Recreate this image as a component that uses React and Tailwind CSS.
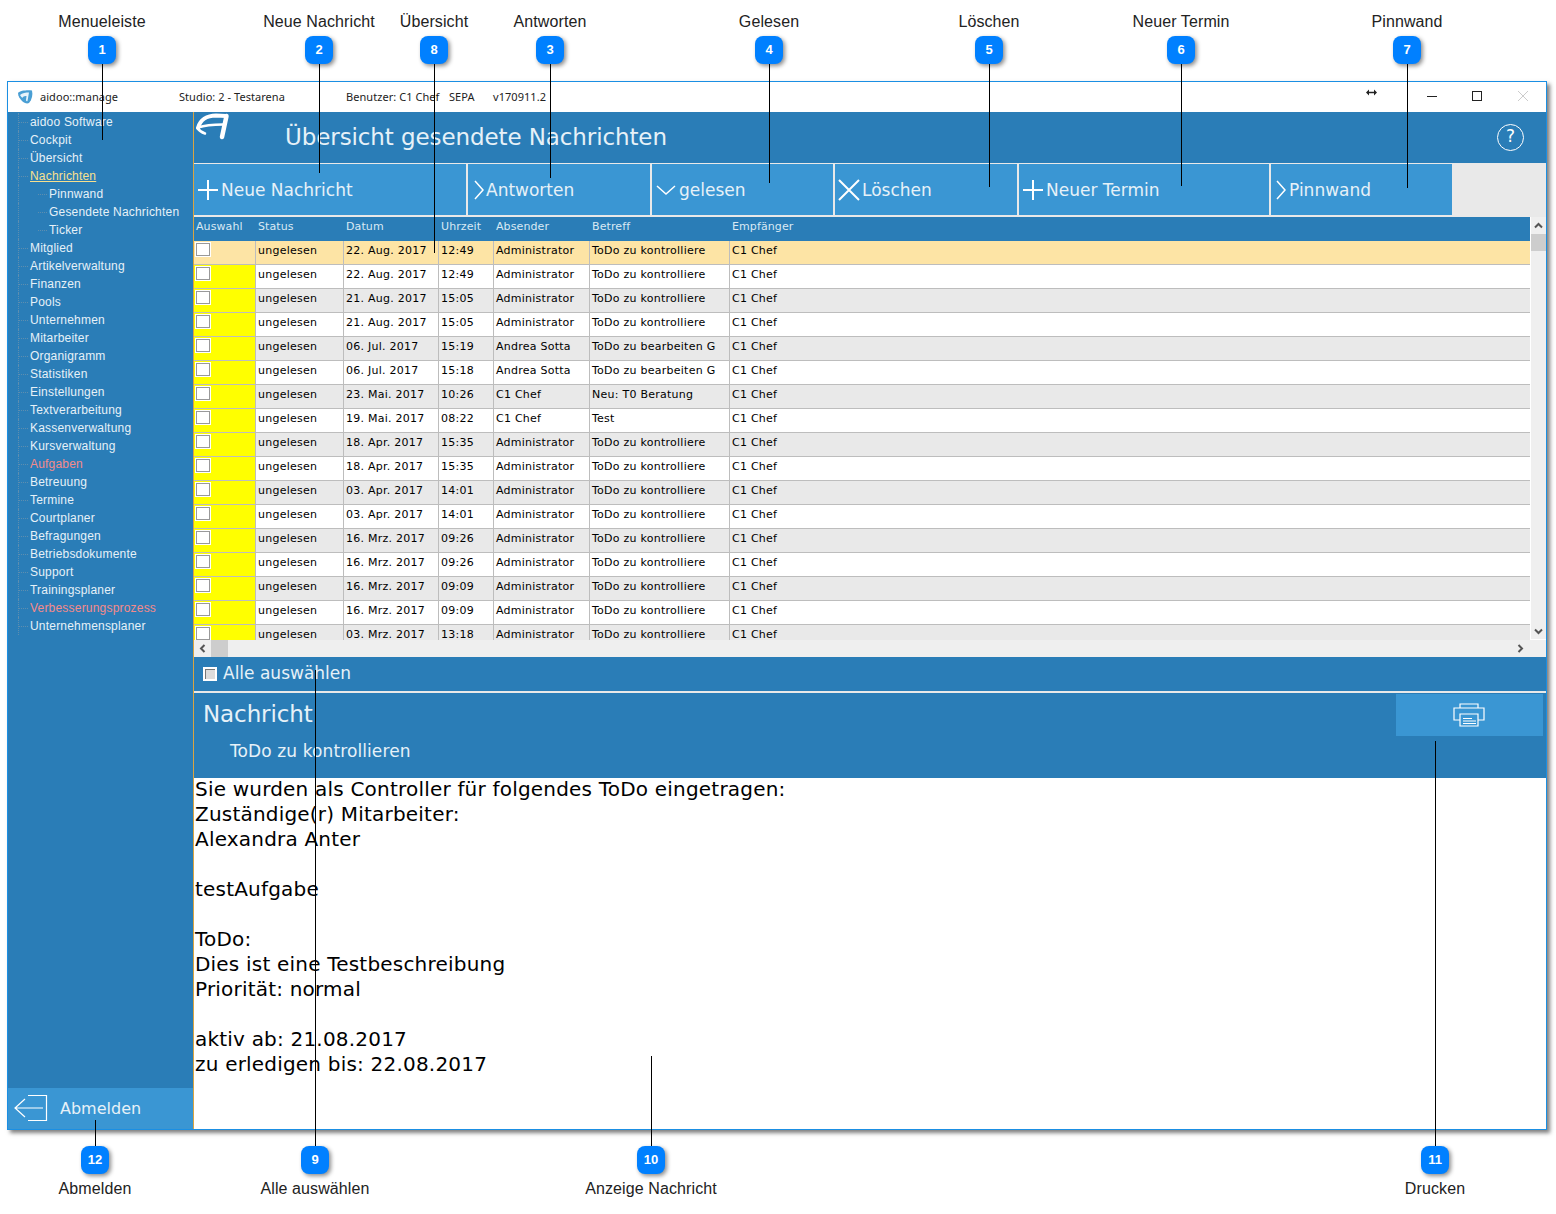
import React from "react";

const menu = [
  { label: "aidoo Software" },
  { label: "Cockpit" },
  { label: "Übersicht" },
  { label: "Nachrichten", active: true },
  { label: "Pinnwand", sub: true },
  { label: "Gesendete Nachrichten", sub: true },
  { label: "Ticker", sub: true },
  { label: "Mitglied" },
  { label: "Artikelverwaltung" },
  { label: "Finanzen" },
  { label: "Pools" },
  { label: "Unternehmen" },
  { label: "Mitarbeiter" },
  { label: "Organigramm" },
  { label: "Statistiken" },
  { label: "Einstellungen" },
  { label: "Textverarbeitung" },
  { label: "Kassenverwaltung" },
  { label: "Kursverwaltung" },
  { label: "Aufgaben", red: true },
  { label: "Betreuung" },
  { label: "Termine" },
  { label: "Courtplaner" },
  { label: "Befragungen" },
  { label: "Betriebsdokumente" },
  { label: "Support" },
  { label: "Trainingsplaner" },
  { label: "Verbesserungsprozess", red: true },
  { label: "Unternehmensplaner" },
];

const rows = [
  ["22. Aug. 2017", "12:49", "Administrator", "ToDo zu kontrolliere"],
  ["22. Aug. 2017", "12:49", "Administrator", "ToDo zu kontrolliere"],
  ["21. Aug. 2017", "15:05", "Administrator", "ToDo zu kontrolliere"],
  ["21. Aug. 2017", "15:05", "Administrator", "ToDo zu kontrolliere"],
  ["06. Jul. 2017", "15:19", "Andrea Sotta", "ToDo zu bearbeiten G"],
  ["06. Jul. 2017", "15:18", "Andrea Sotta", "ToDo zu bearbeiten G"],
  ["23. Mai. 2017", "10:26", "C1 Chef", "Neu: T0 Beratung"],
  ["19. Mai. 2017", "08:22", "C1 Chef", "Test"],
  ["18. Apr. 2017", "15:35", "Administrator", "ToDo zu kontrolliere"],
  ["18. Apr. 2017", "15:35", "Administrator", "ToDo zu kontrolliere"],
  ["03. Apr. 2017", "14:01", "Administrator", "ToDo zu kontrolliere"],
  ["03. Apr. 2017", "14:01", "Administrator", "ToDo zu kontrolliere"],
  ["16. Mrz. 2017", "09:26", "Administrator", "ToDo zu kontrolliere"],
  ["16. Mrz. 2017", "09:26", "Administrator", "ToDo zu kontrolliere"],
  ["16. Mrz. 2017", "09:09", "Administrator", "ToDo zu kontrolliere"],
  ["16. Mrz. 2017", "09:09", "Administrator", "ToDo zu kontrolliere"],
  ["03. Mrz. 2017", "13:18", "Administrator", "ToDo zu kontrolliere"],
];

const topCallouts = [
  { n: 1, label: "Menueleiste", x: 102, end: 140 },
  { n: 2, label: "Neue Nachricht", x: 319, end: 173 },
  { n: 8, label: "Übersicht", x: 434, end: 253 },
  { n: 3, label: "Antworten", x: 550, end: 178 },
  { n: 4, label: "Gelesen", x: 769, end: 183 },
  { n: 5, label: "Löschen", x: 989, end: 187 },
  { n: 6, label: "Neuer Termin", x: 1181, end: 186 },
  { n: 7, label: "Pinnwand", x: 1407, end: 188 },
];

const bottomCallouts = [
  { n: 12, label: "Abmelden", x: 95, start: 1120 },
  { n: 9, label: "Alle auswählen", x: 315, start: 670 },
  { n: 10, label: "Anzeige Nachricht", x: 651, start: 1056 },
  { n: 11, label: "Drucken", x: 1435, start: 741 },
];

const message = [
  "Sie wurden als Controller für folgendes ToDo eingetragen:",
  "Zuständige(r) Mitarbeiter:",
  "Alexandra Anter",
  "",
  "testAufgabe",
  "",
  "ToDo:",
  "Dies ist eine Testbeschreibung",
  "Priorität: normal",
  "",
  "aktiv ab: 21.08.2017",
  "zu erledigen bis: 22.08.2017",
];

const PlusIcon = () => (
  <svg width="22" height="22" viewBox="0 0 22 22" stroke="white" strokeWidth="2" fill="none">
    <path d="M11 1v20M1 11h20" />
  </svg>
);
const RightIcon = () => (
  <svg width="12" height="20" viewBox="0 0 12 20" stroke="white" strokeWidth="1.5" fill="none">
    <path d="M2 1l8 9-8 9" />
  </svg>
);
const DownIcon = () => (
  <svg width="20" height="12" viewBox="0 0 20 12" stroke="white" strokeWidth="1.5" fill="none">
    <path d="M1 2l9 8 9-8" />
  </svg>
);
const CloseIcon = () => (
  <svg width="22" height="22" viewBox="0 0 22 22" stroke="white" strokeWidth="2" fill="none">
    <path d="M1 1l20 20M21 1L1 21" />
  </svg>
);

const toolbar = [
  { label: "Neue Nachricht", icon: <PlusIcon />, w: "w-[272px]", pl: "pl-[3px]", gap: "gap-[2px]" },
  { label: "Antworten", icon: <RightIcon />, w: "w-[182px]", pl: "pl-[5px]", gap: "gap-[1px]" },
  { label: "gelesen", icon: <DownIcon />, w: "w-[181px]", pl: "pl-[4px]", gap: "gap-[3px]" },
  { label: "Löschen", icon: <CloseIcon />, w: "w-[182px]", pl: "pl-[3px]", gap: "gap-[2px]" },
  { label: "Neuer Termin", icon: <PlusIcon />, w: "w-[250px]", pl: "pl-[3px]", gap: "gap-[2px]" },
  { label: "Pinnwand", icon: <RightIcon />, w: "w-[181px]", pl: "pl-[4px]", gap: "gap-[2px]" },
];

const AppLogo = () => (
  <svg width="40" height="32" viewBox="0 0 40 32" fill="none" stroke="white" strokeLinecap="round">
    <path d="M4 16C6 8 13 3.500 22 3.500L32 4" strokeWidth="4" />
    <path d="M32.500 4L28 25" strokeWidth="4.500" />
    <path d="M4 15.500C10 13.500 20 12.500 29 12.500" strokeWidth="2.500" />
    <path d="M3.500 16C5 18.500 8 20.500 11 21.500" strokeWidth="2.500" />
  </svg>
);

const SmallLogo = () => (
  <svg width="16" height="14" viewBox="0 0 16 14">
    <path d="M1 3C3 .5 10 0 15 .5c1 4 0 9-3 12.500-2 1-5 0-7-2C3 9 1 6 1 3z" fill="#4a9fd4" />
    <path d="M3 5c2-2 6-2.500 9-2.500L10.500 11c-1 .5-1.500 0-1.500-1l.5-4C7 6 5 7 6 8 4.500 7.500 3.500 6 3 5z" fill="#e8f4fb" />
  </svg>
);

const Callout = ({ n, x, y }) => (
  <div
    className="absolute w-[28px] h-[28px] -ml-[14px] -mt-[14px] rounded-[8px] bg-[#0080ff] shadow-[2px_2px_4px_rgba(0,0,0,0.45)] flex items-center justify-center text-white text-[13px] font-bold font-['Liberation_Sans',sans-serif]"
    style={{ left: x, top: y }}
  >
    {n}
  </div>
);

const CalloutLabel = ({ label, x, y }) => (
  <div
    className="absolute -translate-x-1/2 whitespace-nowrap text-[16px] leading-[18px] tracking-[0.1px] text-[#222] font-['Liberation_Sans',sans-serif]"
    style={{ left: x, top: y }}
  >
    {label}
  </div>
);

const Line = ({ x, from, to }) => (
  <div className="absolute w-[1px] bg-black" style={{ left: x, top: from, height: to - from }} />
);

const Checkbox = () => (
  <div className="w-[14px] h-[13px] bg-white border border-[#999] outline outline-1 outline-white" />
);

const cols = "grid grid-cols-[62px_88px_95px_55px_96px_140px_1fr]";

export default function App() {
  return (
    <div className="relative w-[1556px] h-[1214px] bg-white overflow-hidden font-['DejaVu_Sans',sans-serif]">
      <div className="h-[81px]" />

      {/* programmfenster */}
      <div className="ml-[7px] w-[1540px] h-[1049px] flex flex-col border border-[#1b8fe3] shadow-[3px_3px_4px_rgba(0,0,0,0.5)] bg-white">
        <div className="h-[30px] shrink-0 flex items-center text-[11px] tracking-[0.05px] text-[#222] font-['Noto_Sans',sans-serif] relative">
          <div className="ml-[9px] w-[23px] h-[14px]">
            <SmallLogo />
          </div>
          <span className="w-[139px]">aidoo::manage</span>
          <span className="w-[167px]">Studio: 2 - Testarena</span>
          <span className="w-[103px]">Benutzer: C1 Chef</span>
          <span className="w-[44px]">SEPA</span>
          <span>v170911.2</span>
          <svg className="absolute left-[1358px] top-[7px]" width="11" height="7" viewBox="0 0 11 7" fill="#222" stroke="#222">
            <path d="M2 3.500h7" strokeWidth="1.500" />
            <path d="M0 3.500L3 .5v6zM11 3.500L8 .5v6z" strokeWidth="0" />
          </svg>
          <div className="absolute right-[109px] top-[14px] w-[10px] h-[1px] bg-[#222]" />
          <div className="absolute right-[64px] top-[9px] w-[10px] h-[10px] border border-[#222]" />
          <svg className="absolute right-[17px] top-[8px]" width="12" height="12" viewBox="0 0 12 12" stroke="#ccc" fill="none">
            <path d="M1 1l10 10M11 1L1 11" />
          </svg>
        </div>

        <div className="flex flex-1 min-h-0">
          {/* menueleiste */}
          <aside className="w-[186px] shrink-0 bg-[#2a7db7] border-r border-[#d9a441] flex flex-col text-[12px] font-['Liberation_Sans',sans-serif]">
            <ul className="flex-1 pt-[1px] tracking-[0.2px]">
              {menu.map((item) => (
                <li
                  key={item.label}
                  className={
                    "h-[18px] ml-[10px] border-l border-dotted border-[#5e8eaf] flex items-center " +
                    (item.sub ? "pl-[19px]" : "")
                  }
                >
                  <span className="w-[9px] border-t border-dotted border-[#5e8eaf] shrink-0" />
                  <span
                    className={
                      "ml-[2px] leading-[15px] " +
                      (item.active
                        ? "text-[#f8e08e] underline"
                        : item.red
                          ? "text-[#f58a8a]"
                          : "text-[#e6f1f8]")
                    }
                  >
                    {item.label}
                  </span>
                </li>
              ))}
            </ul>
            <div className="h-[41px] shrink-0 bg-[#3a96d3] flex items-center pl-[6px] font-['DejaVu_Sans',sans-serif] text-[16px] text-[#e6f1f8]">
              <svg width="34" height="28" viewBox="0 0 34 28" stroke="white" fill="none">
                <path d="M14 .5h18.500v25H14M1 13h28M11 4l-10 9 10 9" strokeWidth="1.200" />
              </svg>
              <span className="ml-[12px]">Abmelden</span>
            </div>
          </aside>

          <main className="flex-1 min-w-0 flex flex-col">
            {/* kopfzeile */}
            <div className="h-[51px] shrink-0 bg-[#2a7db7] flex items-center relative">
              <div className="absolute left-0 top-0">
                <AppLogo />
              </div>
              <h1 className="ml-[91px] text-[23px] tracking-[-0.1px] font-normal text-[#e6f1f8] leading-none">
                Übersicht gesendete Nachrichten
              </h1>
              <div className="ml-auto mr-[22px] -mt-[1px] w-[27px] h-[27px] rounded-full border border-white flex items-center justify-center text-[17px] text-white">
                ?
              </div>
            </div>

            {/* werkzeugleiste */}
            <div className="h-[54px] shrink-0 bg-[#e9e9e9] border-t border-[#e9e9e9] pb-[2px] flex gap-[2px]">
              {toolbar.map((b) => (
                <button
                  key={b.label}
                  type="button"
                  className={"h-full bg-[#3a96d3] flex items-center text-[17px] text-[#e6f1f8] " + b.w + " " + b.pl + " " + b.gap}
                >
                  {b.icon}
                  <span className="mt-[2px]">{b.label}</span>
                </button>
              ))}
            </div>

            {/* tabelle */}
            <div className="h-[440px] shrink-0 flex flex-col bg-[#efefef]">
              <div className="flex-1 min-h-0 flex">
                <div className="flex-1 min-w-0 flex flex-col overflow-hidden">
                  <div className={cols + " h-[24px] shrink-0 bg-[#2a7db7] text-[11px] leading-[18px] text-[#d9e9f4] tracking-[0.1px]"}>
                    {["Auswahl", "Status", "Datum", "Uhrzeit", "Absender", "Betreff", "Empfänger"].map((h) => (
                      <div key={h} className="pl-[2px] pt-[1px]">
                        {h}
                      </div>
                    ))}
                  </div>
                  <div className="flex-1 overflow-hidden bg-white">
                    {rows.map((r, i) => {
                      const bg = i === 0 ? "bg-[#fde4a5]" : i % 2 === 0 ? "bg-[#e9e9e9]" : "bg-white";
                      return (
                        <div key={i} className={cols + " h-[24px] border-b border-[#bdbdbd] text-[11px] leading-[20px] tracking-[0.25px] text-black " + bg}>
                          <div className={"border-r border-[#bdbdbd] pl-[2px] pt-[2px] " + (i === 0 ? "" : "bg-[#ffff00]")}>
                            <Checkbox />
                          </div>
                          <div className="border-r border-[#bdbdbd] pl-[2px]">ungelesen</div>
                          <div className="border-r border-[#bdbdbd] pl-[2px]">{r[0]}</div>
                          <div className="border-r border-[#bdbdbd] pl-[2px]">{r[1]}</div>
                          <div className="border-r border-[#bdbdbd] pl-[2px] whitespace-nowrap overflow-hidden">{r[2]}</div>
                          <div className="border-r border-[#bdbdbd] pl-[2px] whitespace-nowrap overflow-hidden">{r[3]}</div>
                          <div className="pl-[2px]">C1 Chef</div>
                        </div>
                      );
                    })}
                  </div>
                </div>
                <div className="w-[16px] shrink-0 flex flex-col items-center justify-between border-l border-b border-white pt-[5px] pb-[4px]">
                  <div className="w-full flex flex-col items-center">
                    <svg width="9" height="7" viewBox="0 0 9 7" stroke="#555" strokeWidth="2" fill="none">
                      <path d="M1 5.500L4.500 2 8 5.500" />
                    </svg>
                    <div className="w-full h-[17px] mt-[5px] bg-[#cdcdcd]" />
                  </div>
                  <svg width="9" height="7" viewBox="0 0 9 7" stroke="#555" strokeWidth="2" fill="none">
                    <path d="M1 1.500L4.500 5 8 1.500" />
                  </svg>
                </div>
              </div>
              <div className="h-[17px] shrink-0 bg-[#efefef] flex items-center relative">
                <svg className="ml-[5px]" width="7" height="9" viewBox="0 0 7 9" stroke="#555" strokeWidth="2" fill="none">
                  <path d="M5.500 1L2 4.500 5.500 8" />
                </svg>
                <div className="ml-[5px] w-[17px] h-full bg-[#cdcdcd]" />
                <svg className="absolute right-[22px] top-[4px]" width="7" height="9" viewBox="0 0 7 9" stroke="#555" strokeWidth="2" fill="none">
                  <path d="M1.500 1L5 4.500 1.500 8" />
                </svg>
              </div>
            </div>

            {/* alle auswaehlen */}
            <div className="h-[34px] shrink-0 bg-[#2a7db7] flex items-center pl-[9px] text-[17px] text-[#e6f1f8]">
              <div className="w-[14px] h-[14px] bg-[#dcdcdc] border-2 border-white shadow-[inset_1px_1px_0_#777]" />
              <span className="ml-[6px]">Alle auswählen</span>
            </div>
            <div className="h-[2px] shrink-0 bg-[#e9e9e9]" />

            {/* nachricht */}
            <div className="h-[85px] shrink-0 bg-[#2a7db7] relative text-[#e6f1f8]">
              <div className="pl-[9px] pt-[6px] text-[23px] tracking-[-0.1px] leading-[30px]">Nachricht</div>
              <div className="pl-[36px] pt-[11px] text-[17px] tracking-[0.1px] leading-[22px]">ToDo zu kontrollieren</div>
              <button
                type="button"
                className="absolute right-[3px] top-[1px] w-[147px] h-[42px] bg-[#3a96d3] flex items-center justify-center pr-[2px]"
              >
                <svg width="32" height="24" viewBox="0 0 32 24" stroke="white" strokeWidth="1.200" fill="none">
                  <path d="M7 5V1h18v4" />
                  <path d="M7 17H1V5h30v12h-6" />
                  <path d="M7 11h18v12H7z" />
                  <path d="M10 15.500h9M10 18h13M10 20.500h13" />
                </svg>
              </button>
            </div>

            {/* nachrichtentext */}
            <div className="flex-1 min-h-0 bg-white pl-[1px] text-[20px] leading-[25px] tracking-[0.2px] text-black">
              <div className="-mt-[1px]">
                {message.map((line, i) => (
                  <div key={i} className="h-[25px]">
                    {line}
                  </div>
                ))}
              </div>
            </div>
          </main>
        </div>
      </div>

      {/* legende */}
      {topCallouts.map((c) => (
        <React.Fragment key={c.n}>
          <CalloutLabel label={c.label} x={c.x} y={13} />
          <Line x={c.x} from={60} to={c.end} />
          <Callout n={c.n} x={c.x} y={50} />
        </React.Fragment>
      ))}
      {bottomCallouts.map((c) => (
        <React.Fragment key={c.n}>
          <Line x={c.x} from={c.start} to={1150} />
          <Callout n={c.n} x={c.x} y={1160} />
          <CalloutLabel label={c.label} x={c.x} y={1180} />
        </React.Fragment>
      ))}
    </div>
  );
}
